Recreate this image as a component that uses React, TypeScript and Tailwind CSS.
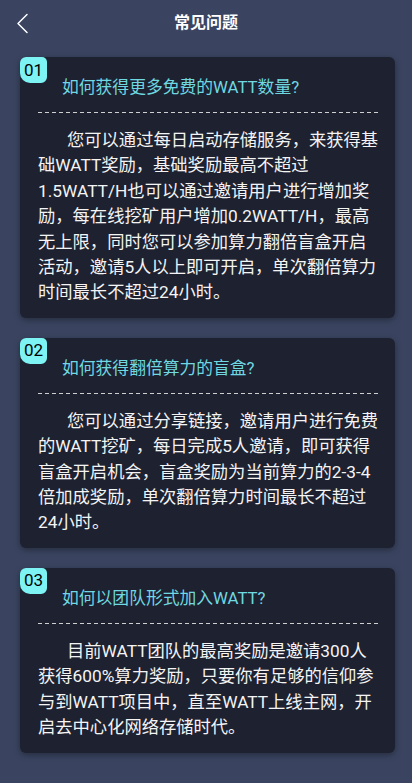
import React from "react";

const faqs = [
  {
    n: "01",
    q: "如何获得更多免费的WATT数量?",
    a: "您可以通过每日启动存储服务，来获得基础WATT奖励，基础奖励最高不超过1.5WATT/H也可以通过邀请用户进行增加奖励，每在线挖矿用户增加0.2WATT/H，最高无上限，同时您可以参加算力翻倍盲盒开启活动，邀请5人以上即可开启，单次翻倍算力时间最长不超过24小时。",
  },
  {
    n: "02",
    q: "如何获得翻倍算力的盲盒?",
    a: "您可以通过分享链接，邀请用户进行免费的WATT挖矿，每日完成5人邀请，即可获得盲盒开启机会，盲盒奖励为当前算力的2-3-4倍加成奖励，单次翻倍算力时间最长不超过24小时。",
  },
  {
    n: "03",
    q: "如何以团队形式加入WATT?",
    a: "目前WATT团队的最高奖励是邀请300人获得600%算力奖励，只要你有足够的信仰参与到WATT项目中，直至WATT上线主网，开启去中心化网络存储时代。",
  },
];

export default function App() {
  return (
    <div
      className="min-h-[783px] w-[412px] bg-[#3a4460] pb-8"
      style={{ fontFamily: "Roboto, 'Noto Sans CJK SC', sans-serif" }}
    >
      <div className="relative flex h-[45px] items-center justify-center">
        <svg
          className="absolute left-[15px] top-[13px]"
          width="14"
          height="21"
          viewBox="0 0 14 21"
          fill="none"
          stroke="white"
          strokeWidth="1.5"
          strokeLinecap="round"
          strokeLinejoin="round"
        >
          <path d="M12 1.5 L3 10.5 L12 19.5" />
        </svg>
        <span className="text-[16px] font-bold text-white">常见问题</span>
      </div>
      <div className="mt-[12px] flex flex-col gap-[20px] pl-[20px] pr-[17px]">
        {faqs.map((f) => (
          <div
            key={f.n}
            className="relative rounded-[6px] bg-[#1e2130] pb-[12px] pl-[18px] pr-[15px] pt-[18px] shadow-[0_2px_6px_rgba(0,0,0,0.35)]"
          >
            <div className="absolute left-0 top-0 flex h-[26px] w-[27px] items-center justify-center rounded-tl-[6px] rounded-tr-[5px] rounded-br-[6px] rounded-bl-[10px] bg-[#7ef3f3] text-[17px] leading-none text-black">
              {f.n}
            </div>
            <div className="pl-[24px] text-[16.8px] leading-[24px] text-[#6fd8e0]">
              {f.q}
            </div>
            <div className="mt-[13px] h-px w-full bg-[repeating-linear-gradient(90deg,#d0d0d0_0px,#d0d0d0_4px,transparent_4px,transparent_7px)]" />
            <p className="mt-[15px] indent-[29px] text-[17.3px] leading-[25.4px] text-[#f4f4f4]">
              {f.a}
            </p>
          </div>
        ))}
      </div>
    </div>
  );
}
